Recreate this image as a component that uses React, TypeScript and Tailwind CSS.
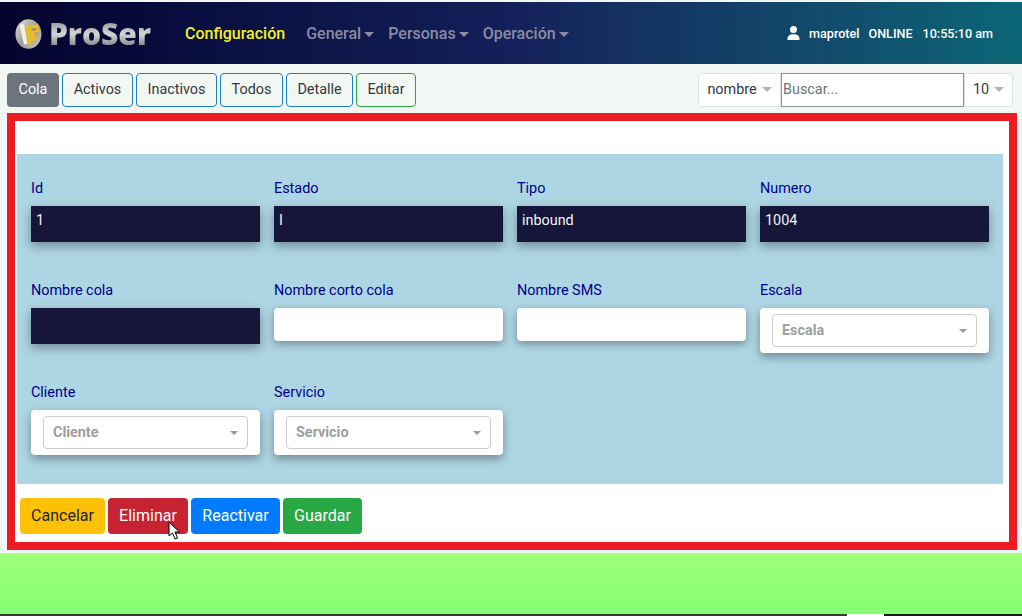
const font = { fontFamily: 'Roboto, "Liberation Sans", sans-serif' };

const Caret = ({ className }: { className: string }) => (
    <span className={`inline-block w-0 h-0 border-x-[5px] border-x-transparent border-t-[5px] ${className}`} />
);

const NavItem = ({ label }: { label: string }) => (
    <span className="flex items-center gap-[3px] text-[16px] font-medium text-[#8b8ba3]">
        {label}
        <Caret className="border-t-[#8b8ba3]" />
    </span>
);

const Logo = () => (
    <div className="flex items-center gap-[7px] w-[136px]">
        <svg width="30" height="34" viewBox="0 0 30 34">
            <defs>
                <linearGradient id="disc" x1="0" y1="0" x2="1" y2="1">
                    <stop offset="0" stopColor="#e2e0d8" />
                    <stop offset="0.55" stopColor="#9c9a94" />
                    <stop offset="1" stopColor="#cfcdc6" />
                </linearGradient>
            </defs>
            <ellipse cx="15" cy="17" rx="14.5" ry="16.5" fill="url(#disc)" />
            <path d="M5 7 L10 5 L14 28 L10 29 Z" fill="#f1efe8" />
            <path d="M11 8 L26 6 L27 15 L22 15 L22 19 L25 19 L23 24 L19 25 L17 30 L15 29 Z" fill="#e8bd2c" />
            <path d="M18 11 L24 10 L24 13 L19 13 Z" fill="#a8905a" />
        </svg>
        <span className="text-[30px] leading-none font-extrabold bg-gradient-to-b from-[#8d8d92] via-[#d5d5d5] to-[#77777a] bg-clip-text text-transparent" style={{ fontFamily: '"Open Sans", sans-serif' }}>
            ProSer
        </span>
    </div>
);

const Header = () => (
    <div className="h-[62px] mt-[2px] flex items-center pl-[15px] pr-[29px] pt-[2px] bg-gradient-to-r from-[#04042e] via-[#14205a] to-[#0b6675]">
        <Logo />
        <span className="ml-[34px] text-[16px] font-medium text-[#f0f02a]">Configuración</span>
        <div className="ml-[21px] flex gap-[14px]">
            <NavItem label="General" />
            <NavItem label="Personas" />
            <NavItem label="Operación" />
        </div>
        <div className="ml-auto flex items-center text-[12.6px] font-medium text-white">
            <svg width="13" height="14" viewBox="0 0 448 512" fill="currentColor" className="mr-[9px] mb-[2px]">
                <path d="M224 256a128 128 0 1 0 0-256 128 128 0 1 0 0 256zm-45.700 48C79.800 304 0 383.800 0 482.300 0 498.700 13.300 512 29.700 512h388.600c16.400 0 29.700-13.300 29.700-29.700C448 383.800 368.200 304 269.700 304h-91.400z" />
            </svg>
            <span>maprotel</span>
            <span className="ml-[9px]">ONLINE</span>
            <span className="ml-[10px]">10:55:10 am</span>
        </div>
    </div>
);

const ToolButton = ({ label, w, green }: { label: string; w: string; green?: boolean }) => (
    <button className={`${w} h-[34px] rounded-[4px] border text-[14.4px] text-[#343a40] ${green ? 'border-[#28a745]' : 'border-[#1a7fc4]'}`}>
        {label}
    </button>
);

const Toolbar = () => (
    <div className="h-[49px] flex items-center pt-[2px] pl-[7px] pr-[9px] bg-[#f2f7f3]">
        <div className="flex gap-[3px]">
            <button className="w-[52px] h-[34px] rounded-[4px] bg-[#6c757d] text-[14.4px] text-white">Cola</button>
            <ToolButton label="Activos" w="w-[71px]" />
            <ToolButton label="Inactivos" w="w-[81px]" />
            <ToolButton label="Todos" w="w-[63px]" />
            <ToolButton label="Detalle" w="w-[67px]" />
            <ToolButton label="Editar" w="w-[60px]" green />
        </div>
        <div className="ml-auto flex items-center text-[14.4px] text-[#343a40]">
            <div className="w-[83px] h-[34px] flex items-center justify-center gap-[5px] rounded-l-[4px] border border-[#dee2e6] bg-white">
                nombre <Caret className="border-t-[#adb5bd]" />
            </div>
            <input placeholder="Buscar..." className="w-[183px] h-[34px] px-[1px] border border-[#8f9396] bg-white text-[14.4px] placeholder:text-[#6c757d] outline-none" />
            <div className="w-[49px] h-[34px] flex items-center justify-center gap-[5px] rounded-r-[4px] border border-[#dee2e6] bg-white">
                10 <Caret className="border-t-[#adb5bd]" />
            </div>
        </div>
    </div>
);

const Label = ({ text }: { text: string }) => (
    <label className="block h-[29px] pt-[2px] text-[14.4px] leading-[20px] text-[#00008b]">{text}</label>
);

const DarkField = ({ label, value }: { label: string; value: string }) => (
    <div>
        <Label text={label} />
        <div className="h-[36px] pl-[5px] pt-[5px] bg-[#16163a] text-[14.4px] leading-[20px] text-[#f2f2f2] shadow-[0_4px_10px_rgba(0,0,0,0.35)]">
            {value}
        </div>
    </div>
);

const LightField = ({ label }: { label: string }) => (
    <div>
        <Label text={label} />
        <div className="h-[33px] rounded-[4px] bg-white shadow-[0_3px_8px_rgba(0,0,0,0.35)]" />
    </div>
);

const SelectField = ({ label }: { label: string }) => (
    <div>
        <Label text={label} />
        <div className="h-[45px] p-[6px] pl-[12px] pr-[12px] rounded-[4px] bg-white shadow-[0_4px_10px_rgba(0,0,0,0.35)]">
            <div className="h-[33px] flex items-center justify-between pl-[9px] pr-[9px] rounded-[4px] border border-[#ccc] text-[14.4px] font-bold text-[#9e9e9e]">
                {label}
                <span className="inline-block w-0 h-0 border-x-[4px] border-x-transparent border-t-[4px] border-t-[#999]" />
            </div>
        </div>
    </div>
);

const ActionButton = ({ label, className }: { label: string; className: string }) => (
    <button className={`h-[36px] rounded-[4px] text-[16px] ${className}`}>{label}</button>
);

const Cursor = () => (
    <svg width="13" height="20" viewBox="0 0 13 20" className="absolute left-[148px] top-[23px]">
        <path d="M1 1 L1 15 L4.500 12 L7 18 L9.500 17 L7 11 L11.500 11 Z" fill="#fff" stroke="#000" strokeWidth="1" />
    </svg>
);

export default function App() {
    return (
        <div className="w-[1022px] h-[616px] overflow-hidden flex flex-col bg-[#f2f7f3]" style={font}>
            <Header />
            <Toolbar />
            <div className="mx-[7px] mr-[5px] h-[437px] border-[8px] border-[#ed1c24] bg-white">
                <div className="ml-[2px] mr-[6px] mt-[33px] h-[330px] pt-[23px] px-[14px] bg-[#add5e3] grid grid-cols-4 gap-x-[14px] auto-rows-[102px]">
                    <DarkField label="Id" value="1" />
                    <DarkField label="Estado" value="I" />
                    <DarkField label="Tipo" value="inbound" />
                    <DarkField label="Numero" value="1004" />
                    <DarkField label="Nombre cola" value="" />
                    <LightField label="Nombre corto cola" />
                    <LightField label="Nombre SMS" />
                    <SelectField label="Escala" />
                    <SelectField label="Cliente" />
                    <SelectField label="Servicio" />
                </div>
                <div className="relative mt-[14px] ml-[5px] flex gap-[3px]">
                    <ActionButton label="Cancelar" className="w-[85px] bg-[#ffc107] text-[#212529]" />
                    <ActionButton label="Eliminar" className="w-[80px] bg-[#c82333] text-white" />
                    <ActionButton label="Reactivar" className="w-[89px] bg-[#007bff] text-white" />
                    <ActionButton label="Guardar" className="w-[79px] bg-[#28a745] text-white" />
                    <Cursor />
                </div>
            </div>
            <div className="mt-[3px] h-[61px] bg-gradient-to-b from-[#a0ff7a] to-[#84ff74] shrink-0" />
            <div className="h-[2px] flex shrink-0">
                <div className="w-[847px] bg-[#3a3a32]" />
                <div className="w-[37px] bg-white" />
                <div className="flex-1 bg-[#1a1a1a]" />
            </div>
        </div>
    );
}
